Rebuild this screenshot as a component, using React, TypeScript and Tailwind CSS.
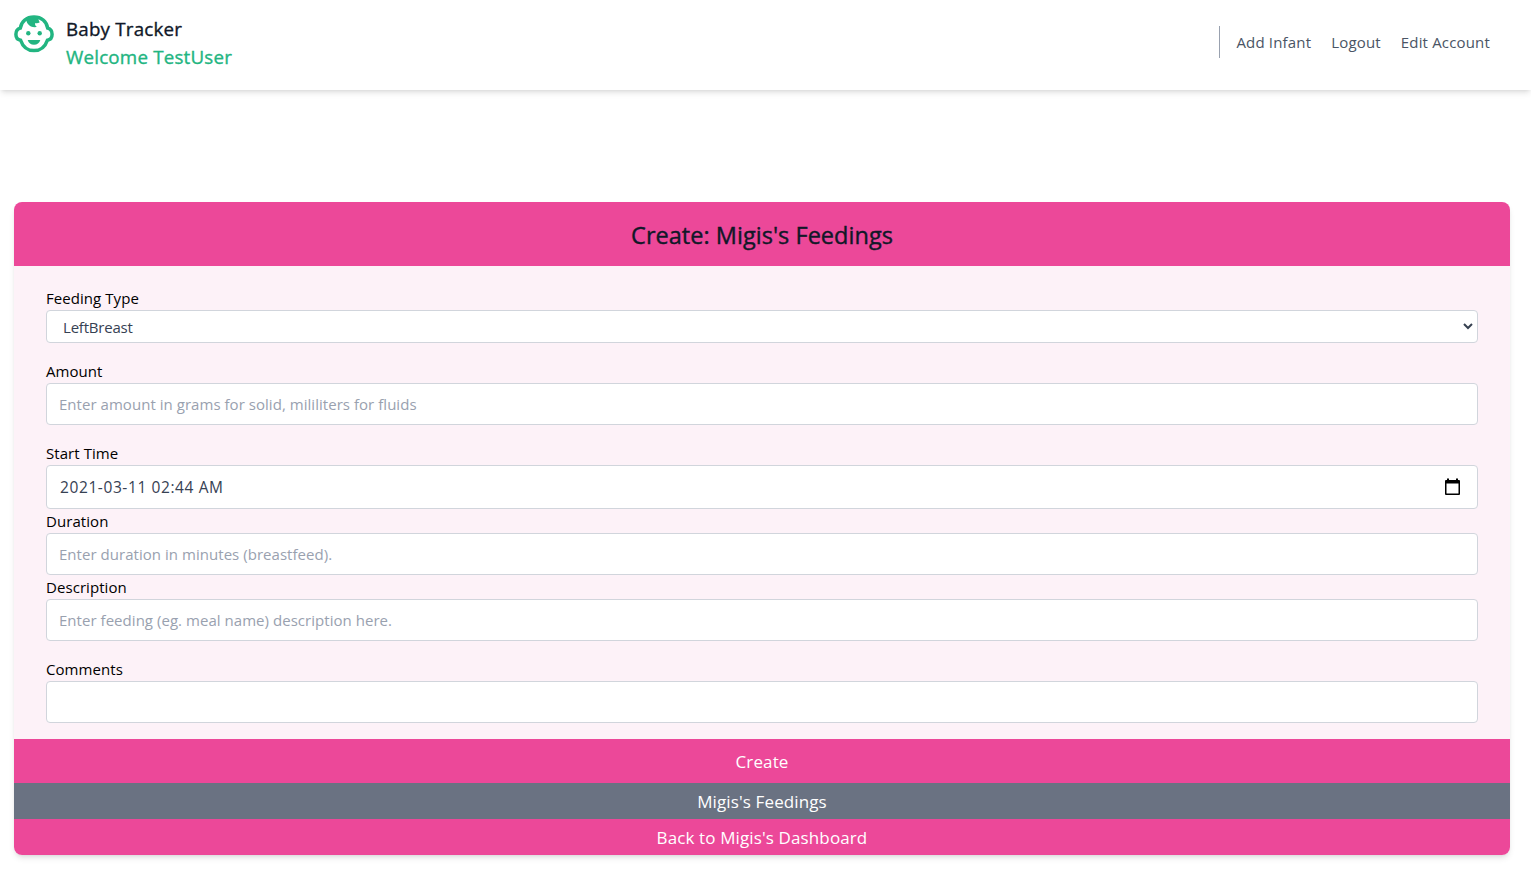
import type { ReactNode } from 'react';

function BabyFace() {
  return (
    <svg viewBox="0 0 40 38" className="h-[38px] w-10 shrink-0" fill="none" stroke="#22b581">
      <path
        d="M20 2.100C12.300 2.100 7.600 6.600 6.300 13.100C3.200 14 1.900 16.500 1.900 19.200C1.900 22.300 3.600 24.700 6.600 25.200C8.800 31.600 13.600 35.600 20 35.600C26.400 35.600 31.200 31.600 33.400 25.200C36.400 24.700 38.100 22.300 38.100 19.200C38.100 16.500 36.800 14 33.700 13.100C32.400 6.600 27.700 2.100 20 2.100Z"
        strokeWidth="3.500"
      />
      <path d="M12 2.500C12 8.500 15.500 13 23 12C21.400 11 20.700 9.600 21.200 8C22.500 8.700 24.300 8.400 25.800 7.200C24.800 6.200 24.400 4.500 24.500 2.500Z" fill="#22b581" stroke="none" />
      <circle cx="14.300" cy="18.200" r="2.200" fill="#22b581" stroke="none" />
      <circle cx="25.700" cy="18.200" r="2.200" fill="#22b581" stroke="none" />
      <path d="M13.700 25H26.300C25.500 28.200 23.100 29.800 20 29.800C16.900 29.800 14.500 28.200 13.700 25Z" fill="#22b581" stroke="none" />
    </svg>
  );
}

function Field({ label, className = '', children }: { label: string; className?: string; children: ReactNode }) {
  return (
    <div className={className}>
      <label className="block h-6 text-[15px] leading-6 tracking-[0.06px] text-black">{label}</label>
      {children}
    </div>
  );
}

const box = 'flex w-full items-center rounded border border-gray-300 bg-white';
const input = 'h-[42px] w-full rounded border border-gray-300 bg-white px-3 text-[15px] leading-6 tracking-[0.04px] text-gray-700 outline-none placeholder:text-gray-400';

export default function App() {
  return (
    <div className="h-[890px] overflow-hidden bg-white font-['Open_Sans',sans-serif]">
      <header className="flex h-[90px] items-start justify-between pl-3.5 pr-[41px] shadow-md">
        <div className="flex gap-3 pt-[15px]">
          <BabyFace />
          <div className="text-[18.75px] leading-7 tracking-[0.2px] [-webkit-text-stroke:0.35px]">
            <div className="text-gray-900">Baby Tracker</div>
            <div className="text-[#22b581]">Welcome TestUser</div>
          </div>
        </div>
        <nav className="mt-[26px] flex h-8 items-center gap-5 border-l border-gray-400 pl-4 text-[15px] tracking-[0.17px] text-gray-600">
          <a>Add Infant</a>
          <a>Logout</a>
          <a>Edit Account</a>
        </nav>
      </header>

      <main className="mt-28 ml-3.5 w-[1496px] overflow-hidden rounded-lg shadow-md">
        <h1 className="flex h-16 items-center justify-center bg-[#ec4899] pt-1 text-[23.5px] tracking-[0.03px] text-gray-900 [-webkit-text-stroke:0.4px]">
          Create: Migis's Feedings
        </h1>
        <form className="bg-[#fdf2f8] px-8 pt-5 pb-4">
          <Field label="Feeding Type" className="mb-4">
            <div className={`${box} h-[33px] justify-between pr-1 pl-4 text-[15px] tracking-[-0.2px] text-gray-700`}>
              <span className="pt-0.5">LeftBreast</span>
              <svg viewBox="0 0 10 7" className="h-[7px] w-2.5" fill="none" stroke="#374151" strokeWidth="2">
                <path d="M1 1L5 5L9 1" />
              </svg>
            </div>
          </Field>
          <Field label="Amount" className="mb-4">
            <input className={input} placeholder="Enter amount in grams for solid, mililiters for fluids" />
          </Field>
          <Field label="Start Time">
            <div className={`${box} h-11 justify-between pr-4 pl-[13px] text-[15.5px] tracking-[0.6px] text-gray-700`}>
              <span className="pt-0.5">2021-03-11 02:44 AM</span>
              <svg viewBox="0 0 16 18" className="h-[18px] w-4" fill="#000">
                <path fillRule="evenodd" d="M2 0.500H4V2H11V0.500H13V2H14Q15 2 15 3V16Q15 17 14 17H1Q0 17 0 16V3Q0 2 1 2H2ZM1.500 5.500V15.500H13.500V5.500Z" />
              </svg>
            </div>
          </Field>
          <Field label="Duration">
            <input className={input} placeholder="Enter duration in minutes (breastfeed)." />
          </Field>
          <Field label="Description" className="mb-4">
            <input className={input} placeholder="Enter feeding (eg. meal name) description here." />
          </Field>
          <Field label="Comments">
            <input className={input} />
          </Field>
        </form>
        <div className="flex flex-col text-[17px] leading-7 tracking-[0.12px] text-white">
          <button className="h-11 bg-[#ec4899] pt-0.5">Create</button>
          <button className="h-9 bg-gray-500 pt-0.5">Migis's Feedings</button>
          <button className="h-9 bg-[#ec4899] pt-0.5">Back to Migis's Dashboard</button>
        </div>
      </main>
    </div>
  );
}
